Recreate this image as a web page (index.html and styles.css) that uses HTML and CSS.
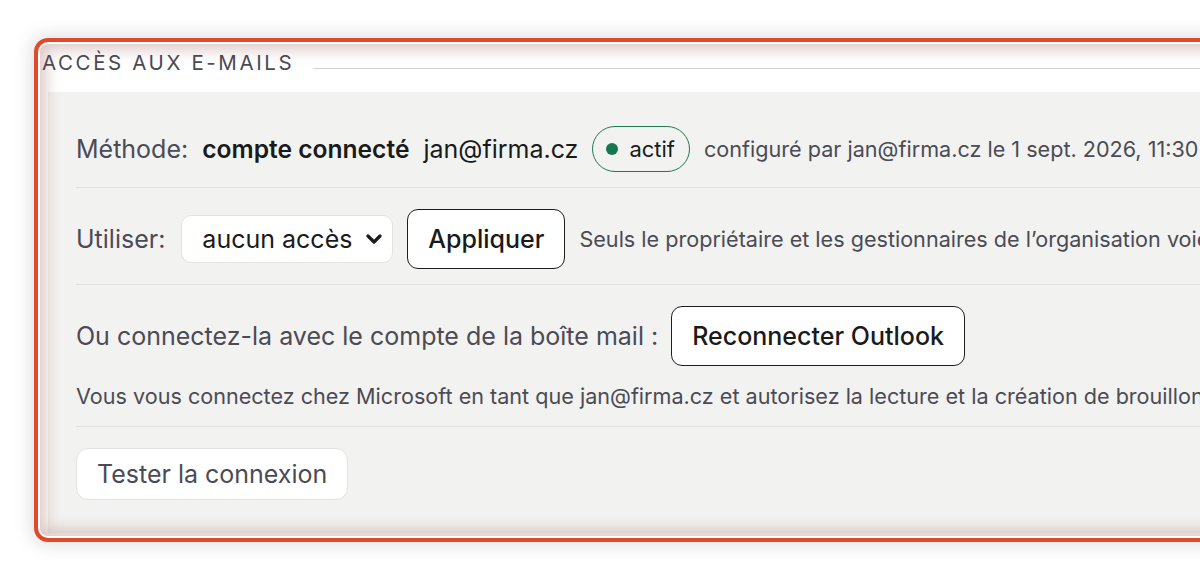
FILE: index.html
```html
<!DOCTYPE html>
<html lang="fr">
<head>
<meta charset="utf-8">
<title>Accès aux e-mails</title>
<link rel="stylesheet" href="styles.css">
</head>
<body>
<section class="section">
  <div class="legend-row">
    <h2 class="legend">Accès aux e-mails</h2>
    <div class="legend-rule"></div>
  </div>
  <div class="panel">
    <div class="row">
      <span class="label">Méthode:</span>
      <strong class="strong">compte connecté</strong>
      <span class="value">jan@firma.cz</span>
      <span class="badge"><span class="dot"></span>actif</span>
      <span class="muted">configuré par jan@firma.cz le 1 sept. 2026, 11:30</span>
    </div>
    <div class="row">
      <span class="label">Utiliser:</span>
      <span class="select-wrap">
        <select class="select"><option>aucun accès</option></select>
        <svg class="chev" width="16" height="10" viewBox="0 0 16 10"><path d="M2 2l6 6 6-6" fill="none" stroke="#1c1c1c" stroke-width="3.2" stroke-linecap="round" stroke-linejoin="round"/></svg>
      </span>
      <button class="btn btn-dark">Appliquer</button>
      <span class="muted">Seuls le propriétaire et les gestionnaires de l’organisation voient et modifient ce réglage.</span>
    </div>
    <div class="row row-col">
      <div class="line">
        <span class="label">Ou connectez-la avec le compte de la boîte mail :</span>
        <button class="btn btn-dark">Reconnecter Outlook</button>
      </div>
      <p class="desc">Vous vous connectez chez Microsoft en tant que jan@firma.cz et autorisez la lecture et la création de brouillons.</p>
    </div>
    <div class="row row-last">
      <button class="btn btn-light">Tester la connexion</button>
    </div>
  </div>
</section>
</body>
</html>
```

FILE: styles.css
```css
html, body {
  margin: 0;
  padding: 0;
  background: #ffffff;
  overflow: hidden;
}
body {
  font-family: Inter, "Noto Sans", "Liberation Sans", sans-serif;
  color: #1c1c1c;
  width: 1200px;
  height: 581px;
}
.section {
  position: relative;
  margin: 38px 0 0 34px;
  width: 1400px;
  padding: 13px 0 9px 8px;
  box-sizing: border-box;
}
.section::after {
  content: "";
  position: absolute;
  inset: 0;
  border: 4px solid #e04a2b;
  border-radius: 14px;
  box-shadow:
    0 0 18px 3px rgba(0, 0, 0, 0.13),
    inset 0 0 0 2px #ffffff,
    inset 0 0 16px 7px rgba(140, 70, 64, 0.32);
  pointer-events: none;
}
.legend-row {
  display: flex;
  align-items: flex-start;
  height: 24px;
}
.legend {
  margin: 0;
  font-size: 20.5px;
  line-height: 24px;
  font-weight: 400;
  letter-spacing: 2.6px;
  text-transform: uppercase;
  color: #4a4a55;
  padding-right: 19px;
}
.legend-rule {
  flex: 1;
  height: 1px;
  margin-top: 17px;
  background: #d2d2d2;
}
.panel {
  margin: 17px 0 0 6px;
  background: #f2f2f0;
  padding: 13px 28px 18px;
}
.row {
  display: flex;
  align-items: center;
  gap: 14px;
  padding: 21px 0 15px;
  border-bottom: 1px solid #e0e0dc;
  white-space: nowrap;
}
.row-first {
  gap: 13px;
}
.row-last {
  border-bottom: none;
}
.row-col {
  flex-direction: column;
  align-items: flex-start;
  gap: 15px;
}
.line {
  display: flex;
  align-items: center;
  gap: 13px;
}
.label {
  font-size: 25px;
  color: #4b4b56;
}
.strong {
  font-size: 24.6px;
  font-weight: 600;
  color: #1a1a1a;
}
.value {
  font-size: 25px;
  color: #1a1a1a;
}
.muted {
  font-size: 21.6px;
  color: #4b4b55;
}
.badge {
  display: inline-flex;
  align-items: center;
  gap: 11px;
  height: 46px;
  box-sizing: border-box;
  padding: 0 14px 0 13px;
  border: 1.7px solid #1f7a52;
  border-radius: 23px;
  font-size: 22px;
  color: #1a1a1a;
}
.dot {
  width: 12px;
  height: 12px;
  border-radius: 50%;
  background: #16784e;
}
.select-wrap {
  position: relative;
  display: inline-block;
  margin-left: 2px;
}
.select {
  appearance: none;
  -webkit-appearance: none;
  width: 212px;
  height: 48px;
  padding: 0 40px 0 20px;
  font-family: inherit;
  font-size: 25px;
  color: #1a1a1a;
  background: #ffffff;
  border: 1px solid #e2e2df;
  border-radius: 10px;
  outline: none;
}
.chev {
  position: absolute;
  right: 11px;
  top: 19px;
  pointer-events: none;
}
.btn {
  font-family: inherit;
  cursor: pointer;
  background: #ffffff;
}
.btn-dark {
  height: 60px;
  padding: 0 20px;
  border: 1.5px solid #1e1e1e;
  border-radius: 11px;
  font-size: 25px;
  font-weight: 500;
  color: #1a1a1a;
}
.btn-light {
  height: 52px;
  padding: 0 20px;
  border: 1px solid #e2e2df;
  border-radius: 12px;
  font-size: 25px;
  font-weight: 400;
  color: #4b4b56;
}
.desc {
  margin: 0;
  font-size: 21.6px;
  line-height: 30px;
  color: #4b4b55;
}
```
